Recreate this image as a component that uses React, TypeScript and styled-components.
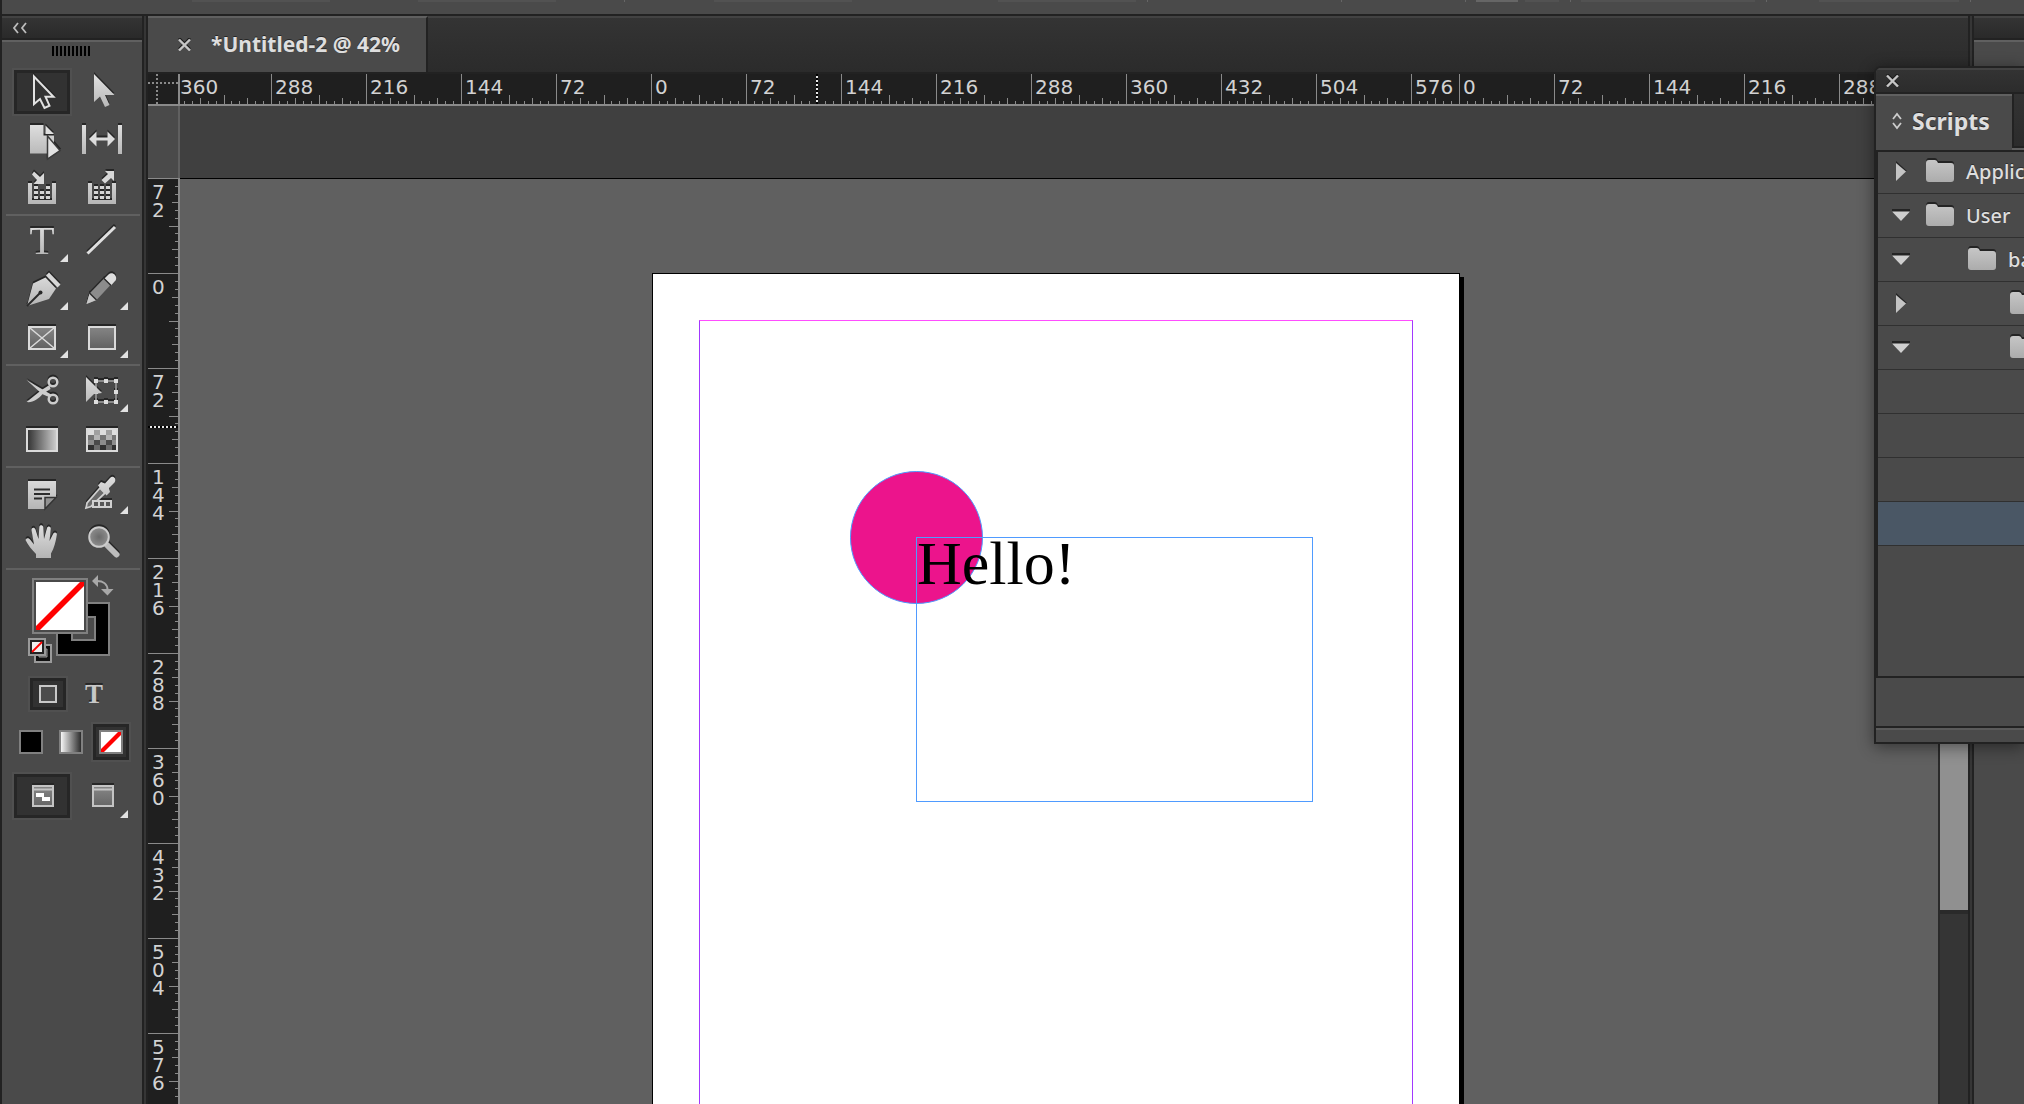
import React from "react";
import styled, { createGlobalStyle, css } from "styled-components";

const c = {
  edge: "#222222",
  panel: "#4a4a4a",
  highlight: "#606060",
  ruler: "#1f1f1f",
  tick: "#8a8a8a",
  board: "#606060",
  text: "#dedede",
  frame: "#4f9bff",
};

const STEP = 95;

const GlobalStyle = createGlobalStyle`
  *, *::before, *::after { box-sizing: border-box; }
  html, body { margin: 0; height: 100%; overflow: hidden; background: ${c.panel}; }
  body { font-family: "Noto Sans", "Open Sans", sans-serif; color: ${c.text}; }
  button { font: inherit; color: inherit; background: none; border: 0; padding: 0; margin: 0; cursor: pointer; }
  ul { list-style: none; margin: 0; padding: 0; }
  svg { display: block; }
`;

const Shell = styled.div`
  position: relative;
  height: 100vh;
  display: grid;
  grid-template-columns: minmax(0, 1fr);
  grid-template-rows: 16px minmax(0, 1fr);
  border-left: 2px solid ${c.edge};
  overflow: hidden;
`;

const ControlStrip = styled.header`
  display: flex;
  align-items: flex-start;
  padding-left: 190px;
  background: ${c.panel};
  border-bottom: 2px solid ${c.edge};
  overflow: hidden;
`;

const StripMark = styled.span<{ $gap: number; $width: number; $bright?: boolean }>`
  flex: none;
  height: 2px;
  margin-left: ${(p) => p.$gap}px;
  width: ${(p) => p.$width}px;
  background: ${(p) => (p.$bright ? "#666666" : "#525252")};
`;

const Workspace = styled.div`
  display: flex;
  min-height: 0;
`;

const Gutter = styled.div`
  flex: none;
  width: 6px;
  background: #363636;
  border: solid ${c.edge};
  border-width: 0 2px;
`;

const DockHeader = styled.div`
  display: flex;
  align-items: center;
  height: 24px;
  padding-left: 10px;
  background: linear-gradient(#343434, #2a2a2a);
  border-top: 2px solid #424242;
  border-bottom: 2px solid ${c.edge};
`;

const DockBody = styled.div`
  flex: 1;
  background: ${c.panel};
  border-top: 2px solid ${c.highlight};
`;

const RightDock = styled.aside`
  flex: none;
  width: 50px;
  display: flex;
  flex-direction: column;
`;

/* ---------- tool panel ---------- */

const Toolbox = styled.nav`
  flex: none;
  width: 140px;
  display: flex;
  flex-direction: column;
`;

const Grip = styled.div`
  width: 38px;
  height: 10px;
  margin: 4px 0 12px 50px;
  background: repeating-linear-gradient(90deg, #000000 0 2px, transparent 2px 4px);
`;

const ToolGroup = styled.div<{ $tail: number }>`
  display: grid;
  grid-template-columns: 56px 56px;
  gap: 4px;
  margin: 0 2px 0 4px;
  padding: 2px 8px ${(p) => p.$tail}px 8px;
  border-bottom: 2px solid ${c.highlight};
`;

const pressed = css`
  background: #323232;
  box-shadow: inset 0 0 0 3px #262626;
  outline: 2px solid #505050;
`;

const ToolButton = styled.button<{ $active?: boolean; $more?: boolean }>`
  position: relative;
  display: grid;
  place-items: center;
  width: 56px;
  height: 44px;
  ${(p) => p.$active && pressed}
  ${(p) =>
    p.$more &&
    css`
      &::after {
        content: "";
        position: absolute;
        right: 2px;
        bottom: 0;
        width: 8px;
        height: 8px;
        background: #e2e2e2;
        clip-path: polygon(100% 0, 100% 100%, 0 100%);
      }
    `}
`;

const ToolSvg = styled.svg`
  flex: none;
  width: 56px;
  height: 44px;
  overflow: visible;
  filter: drop-shadow(0 -2px 0 #262626);
`;

const ColorSection = styled.div`
  display: flex;
  flex-direction: column;
  gap: 14px;
  padding-top: 8px;
`;

const SwatchStack = styled.div`
  position: relative;
  height: 86px;
  margin-left: 26px;
`;

const StackedSwatch = styled.button<{ $left: number; $top: number }>`
  position: absolute;
  left: ${(p) => p.$left}px;
  top: ${(p) => p.$top}px;
`;

const ControlRow = styled.div<{ $inset: number; $gap: number }>`
  display: flex;
  gap: ${(p) => p.$gap}px;
  padding-left: ${(p) => p.$inset}px;
`;

const SmallButton = styled.button<{ $height: number; $active?: boolean }>`
  display: grid;
  place-items: center;
  width: 36px;
  height: ${(p) => p.$height}px;
  ${(p) => p.$active && pressed}
`;

const TypeButton = styled(SmallButton)`
  font: 700 27px/32px "Liberation Serif", serif;
  color: #c8c8c8;
  text-shadow: 0 -2px 0 #262626;
`;

/* ---------- document window ---------- */

const DocumentWindow = styled.main`
  flex: 1;
  min-width: 0;
  display: flex;
  flex-direction: column;
`;

const TabBar = styled.div`
  display: flex;
  height: 58px;
  background: linear-gradient(#343434, #2b2b2b);
  border-bottom: 2px solid ${c.edge};
  box-shadow: inset 0 2px 0 #424242;
`;

const DocTab = styled.div`
  display: flex;
  align-items: center;
  gap: 20px;
  padding: 0 26px 2px 30px;
  background: ${c.panel};
  border-top: 2px solid ${c.highlight};
  border-right: 2px solid ${c.edge};
  font-size: 21px;
  line-height: 28px;
  font-weight: 700;
  white-space: nowrap;
  text-shadow: 0 -1px 0 #262626;
`;

const RulerRow = styled.div`
  display: flex;
  height: 32px;
  background: ${c.ruler};
  border-bottom: 2px solid ${c.tick};
`;

const RulerOrigin = styled.div`
  flex: none;
  position: relative;
  width: 32px;
  border-right: 2px solid ${c.tick};
  &::before,
  &::after {
    content: "";
    position: absolute;
  }
  &::before {
    left: 8px;
    top: 0;
    width: 2px;
    height: 30px;
    background: repeating-linear-gradient(#8a8a8a 0 2px, transparent 2px 4px);
  }
  &::after {
    left: 0;
    top: 8px;
    width: 30px;
    height: 2px;
    background: repeating-linear-gradient(90deg, #8a8a8a 0 2px, transparent 2px 4px);
  }
`;

const HorizontalScale = styled.div`
  position: relative;
  flex: 1;
  min-width: 0;
  display: flex;
  overflow: hidden;
`;

const ScaleRun = styled.div`
  display: flex;
  flex: none;
  &:first-child {
    margin-left: -4px;
  }
`;

const HCell = styled.div<{ $width: number }>`
  flex: none;
  display: grid;
  width: ${(p) => p.$width}px;
  height: 30px;
  overflow: hidden;
  > * {
    grid-area: 1 / 1;
  }
`;

const HLabel = styled.span`
  padding: 1px 0 0 4px;
  font: 20px/24px "DejaVu Sans", sans-serif;
  color: #d2d2d2;
`;

const PointerMark = styled.i<{ $vertical?: boolean }>`
  position: absolute;
  ${(p) =>
    p.$vertical
      ? css`
          left: 0;
          top: 248px;
          width: 30px;
          height: 2px;
          background: repeating-linear-gradient(90deg, #000000 0 2px, #e8e8e8 2px 4px);
        `
      : css`
          left: 636px;
          top: 0;
          width: 2px;
          height: 30px;
          background: repeating-linear-gradient(#000000 0 2px, #e8e8e8 2px 4px);
        `}
`;

const Stage = styled.div`
  flex: 1;
  min-height: 0;
  display: flex;
`;

const SideRuler = styled.div`
  flex: none;
  width: 32px;
  display: flex;
  flex-direction: column;
`;

const SideGap = styled.div`
  height: 72px;
  flex: none;
  background: ${c.panel};
  border-right: 2px solid ${c.highlight};
`;

const VerticalScale = styled.div`
  position: relative;
  flex: 1;
  min-height: 0;
  overflow: hidden;
  background: ${c.ruler};
  border-right: 2px solid ${c.tick};
`;

const VCell = styled.div`
  display: grid;
  height: ${STEP}px;
  > * {
    grid-area: 1 / 1;
  }
`;

const VLabel = styled.span`
  display: flex;
  flex-direction: column;
  padding: 5px 0 0 4px;
  font: 20px/18px "DejaVu Sans", sans-serif;
  color: #d2d2d2;
`;

const Board = styled.div`
  flex: 1;
  min-width: 0;
  display: flex;
  flex-direction: column;
`;

const UpperBand = styled.div`
  flex: none;
  height: 73px;
  background: #404040;
  border-bottom: 1px solid #000000;
`;

const Pasteboard = styled.div`
  position: relative;
  flex: 1;
  min-height: 0;
  overflow: hidden;
  background: ${c.board};
`;

const Page = styled.section`
  position: absolute;
  left: 472px;
  top: 94px;
  width: 808px;
  height: 1046px;
  background: #ffffff;
  border: 1px solid #000000;
  box-shadow: 4px 4px 0 #000000;
`;

const Margins = styled.div`
  position: absolute;
  inset: 46px;
  border: 1px solid #a238ff;
  border-top-color: #ff4dff;
`;

const Circle = styled.div`
  position: absolute;
  left: 197px;
  top: 197px;
  width: 133px;
  height: 133px;
  border-radius: 50%;
  background: #ec148c;
  border: 1px solid ${c.frame};
`;

const TextFrame = styled.div`
  position: absolute;
  left: 263px;
  top: 263px;
  width: 397px;
  height: 265px;
  border: 1px solid ${c.frame};
`;

const Hello = styled.p`
  margin: 0;
  font: 62px/50px "Liberation Serif", serif;
  color: #000000;
`;

const ScrollTrack = styled.div`
  flex: none;
  width: 30px;
  background: #353535;
  border-left: 2px solid #2a2a2a;
`;

const ScrollThumb = styled.div`
  height: 804px;
  background: #909090;
  box-shadow: 0 4px 0 #2a2a2a;
`;

/* ---------- scripts panel ---------- */

const ScriptsPanel = styled.aside`
  position: absolute;
  top: 66px;
  right: 0;
  width: 150px;
  background: ${c.panel};
  border: 2px solid ${c.edge};
  border-right: 0;
  border-radius: 7px 0 0 0;
  box-shadow: 0 3px 16px rgba(0, 0, 0, 0.45);
  overflow: hidden;
`;

const PanelTitle = styled.div`
  display: flex;
  align-items: center;
  height: 26px;
  padding: 0 0 2px 10px;
  background: linear-gradient(#333333, #2c2c2c);
  border-top: 2px solid #424242;
  border-bottom: 2px solid ${c.edge};
`;

const PanelTabs = styled.div`
  display: flex;
  height: 56px;
`;

const PanelTab = styled.button`
  flex: none;
  display: flex;
  align-items: center;
  gap: 10px;
  width: 136px;
  padding: 0 0 4px 16px;
  border-top: 2px solid ${c.highlight};
  font-size: 23px;
  line-height: 30px;
  font-weight: 700;
  text-shadow: 0 -1px 0 #262626;
`;

const TabRest = styled.div`
  flex: 1;
  height: 54px;
  background: linear-gradient(#333333, #2c2c2c);
  border-left: 2px solid ${c.edge};
  border-bottom: 2px solid ${c.edge};
  box-shadow: 0 2px 0 ${c.highlight};
`;

const ScriptList = styled.ul`
  height: 528px;
  border: solid ${c.edge};
  border-width: 2px 0 2px 2px;
`;

const ScriptRow = styled.li<{ $selected?: boolean }>`
  display: flex;
  align-items: center;
  height: 44px;
  padding-left: 13px;
  background: ${(p) => (p.$selected ? "#4a5765" : "transparent")};
  border-bottom: 1px solid #303030;
  overflow: hidden;
  &:first-child {
    height: 42px;
    padding-bottom: 2px;
  }
`;

const Twirl = styled.button`
  flex: none;
  width: 20px;
  height: 24px;
  margin-bottom: 2px;
  display: grid;
  place-items: center;
`;

const RowContent = styled.span<{ $depth: number }>`
  display: flex;
  align-items: center;
  gap: 12px;
  padding-left: ${(p) => 15 + p.$depth * 42}px;
  font-size: 20px;
  line-height: 28px;
  font-weight: 500;
  white-space: nowrap;
  text-shadow: 0 -1px 0 #303030;
  svg {
    flex: none;
    margin-bottom: 4px;
  }
`;

const PanelFooter = styled.div`
  height: 50px;
  border-bottom: 2px solid ${c.edge};
`;

const PanelGrip = styled.div`
  height: 14px;
  border-top: 2px solid #5a5a5a;
`;

/* ---------- drawings ---------- */

const G = "url(#metal)";
const D = "url(#dim)";

const SharedGradients = () => (
  <svg width="0" height="0" style={{ position: "absolute" }} aria-hidden="true">
    <defs>
      <linearGradient id="metal" gradientUnits="userSpaceOnUse" x1="0" y1="4" x2="0" y2="40">
        <stop offset="0" stopColor="#e2e2e2" />
        <stop offset="1" stopColor="#b4b4b4" />
      </linearGradient>
      <linearGradient id="dim" gradientUnits="userSpaceOnUse" x1="0" y1="10" x2="0" y2="38">
        <stop offset="0" stopColor="#8a8a8a" />
        <stop offset="1" stopColor="#5c5c5c" />
      </linearGradient>
      <linearGradient id="folder" x1="0" y1="0" x2="0" y2="1">
        <stop offset="0" stopColor="#c6c6c6" />
        <stop offset="1" stopColor="#acacac" />
      </linearGradient>
      <linearGradient id="ramp">
        <stop offset="0" stopColor="#303030" />
        <stop offset="1" stopColor="#d0d0d0" />
      </linearGradient>
      <linearGradient id="rampBack">
        <stop offset="0" stopColor="#ffffff" />
        <stop offset="1" stopColor="#222222" />
      </linearGradient>
      <radialGradient id="lens">
        <stop offset="0" stopColor="#6a6a6a" />
        <stop offset="1" stopColor="#8e8e8e" />
      </radialGradient>
    </defs>
  </svg>
);

const Close = () => (
  <svg width="13" height="13" viewBox="0 0 13 13" fill="none" strokeWidth="2.4">
    <path d="M1 0L12 11M12 0L1 11" stroke="#1c1c1c" />
    <path d="M1 1.5L12 12.5M12 1.5L1 12.5" stroke="#c6c6c6" />
  </svg>
);

const cells = (cols: number[], rows: number[]) =>
  cols.flatMap((x) => rows.map((y) => [x, y] as const));

const Basket = ({ skip }: { skip?: boolean }) => (
  <>
    <path d="M14 17h4v17h20V17h4v21H14z" fill={G} />
    {cells([20, 26, 32], [20, 25, 30])
      .filter(([x, y]) => !(skip && x === 26 && y < 25))
      .map(([x, y]) => (
        <rect key={`${x}-${y}`} x={x} y={y} width="4" height="3" fill="#d4d4d4" />
      ))}
  </>
);

/* Feather checker: each row runs from a light to a dark pair of tones. */
const featherTones = [
  ["#dedede", "#a0a0a0"],
  ["#b4b4b4", "#757575"],
  ["#8c8c8c", "#4a4a4a"],
  ["#6c6c6c", "#303030"],
];

const art: Record<string, React.ReactNode> = {
  selection: (
    <path d="M20 6.500V34l6-5 4.500 9 5-2.300-4-9h8z" fill="#333333" stroke="#e2e2e2" strokeWidth="2" />
  ),
  direct: <path d="M20 4v28l6-5.500 5 10.500 4.500-2-4.500-10h9.500z" fill={G} />,
  page: (
    <>
      <path d="M16 7h13.500v10.500H40v18H16z" fill={G} />
      <path d="M31.500 7.500l8.500 8.500h-8.500z" fill="#dedede" />
      <path d="M33.500 18v23l12.500-8.500z" fill="#e2e2e2" stroke="#3a3a3a" strokeWidth="1.500" />
    </>
  ),
  gap: (
    <>
      <path d="M8 7h4v29H8zM44 7h4v29h-4z" fill={G} />
      <path d="M15 21l7.500-7.500V19.500h11V13.500L41 21l-7.500 7.500V22.500h-11v6z" fill="#dcdcdc" />
    </>
  ),
  collector: (
    <>
      <path d="M20 5.500l6 5.500 4-4v11H19.500l3.500-4-5-5.500z" fill="#d8d8d8" />
      <Basket skip />
    </>
  ),
  placer: (
    <>
      <path d="M31 5h9v10l-3-3-6 5.500-3.500-3.500 6.500-6z" fill="#d8d8d8" />
      <Basket />
    </>
  ),
  type: (
    <text x="28" y="36" textAnchor="middle" fontFamily="Liberation Serif" fontSize="41" fill={G}>
      T
    </text>
  ),
  line: <path d="M13.500 35.500L41 9" stroke="#e0e0e0" strokeWidth="3" />,
  pen: (
    <>
      <path d="M13 40l6-22.500 12.500-6L42 22.500 35 33z" fill={G} />
      <path d="M32 9.500l3-3L46.500 18.500l-3 3z" fill="#d8d8d8" />
      <path d="M13 40l13-13" stroke="#2a2a2a" strokeWidth="2" />
      <circle cx="26.500" cy="26.500" r="2" fill="#2a2a2a" />
    </>
  ),
  pencil: (
    <>
      <path d="M12.500 38l3-10.500L30 12.500l6.500 6.500L22.500 34z" fill="#8c8c8c" />
      <path d="M12.500 38l3-10.500 7 6.500z" fill="#c8c8c8" />
      <path d="M30.500 12.500l4-4c4-3.500 9.500 1.500 7 6L37 19.500z" fill="#dedede" />
      <path d="M30 12.500l7 7M15.500 27l7 7" stroke="#303030" strokeWidth="1.500" />
    </>
  ),
  frame: (
    <>
      <rect x="15" y="13" width="26" height="22" fill={D} stroke="#dadada" strokeWidth="2" />
      <path d="M16 14l24 20M40 14L16 34" stroke="#dadada" strokeWidth="1.500" />
    </>
  ),
  rect: <rect x="15" y="13" width="26" height="22" fill={D} stroke="#dadada" strokeWidth="2" />,
  scissors: (
    <g fill="none" stroke="#cccccc">
      <path d="M12.500 12L38 27l-2 2.500-8-3.500z" fill="#cccccc" stroke="none" />
      <path d="M12.500 34c6 1 12-3 16-8l8-5-1-4-8 5z" fill="#cccccc" stroke="none" />
      <circle cx="39" cy="14" r="4.300" strokeWidth="2.500" />
      <circle cx="39" cy="31" r="4.300" strokeWidth="2.500" />
    </g>
  ),
  transform: (
    <>
      <rect x="22" y="13" width="20" height="21" fill="none" stroke="#8a8a8a" strokeWidth="2" />
      {cells([20, 30, 40], [11, 22, 32])
        .filter(([x, y]) => !(x === 30 && y === 22))
        .map(([x, y]) => (
          <rect key={`${x}-${y}`} x={x} y={y} width="4" height="4" fill="#dedede" />
        ))}
      <path d="M12 9l16 16-8 1-8 8z" fill={G} />
    </>
  ),
  gradient: <rect x="13" y="13" width="30" height="22" fill="url(#ramp)" stroke="#dadada" strokeWidth="2" />,
  feather: (
    <>
      <rect x="13" y="13" width="30" height="22" fill="#777777" stroke="#dadada" strokeWidth="2" />
      {cells([14, 20, 26, 32, 38], [14, 19, 24, 29]).map(([x, y]) => {
        const row = (y - 14) / 5;
        const odd = ((x - 14) / 6 + row) % 2;
        return (
          <rect key={`${x}-${y}`} x={x} y={y} width={x === 38 ? 4 : 6} height="5" fill={featherTones[row][odd]} />
        );
      })}
    </>
  ),
  note: (
    <>
      <path d="M14 11h28v16L31 39H14z" fill={G} />
      <path d="M31 39V27.500h11z" fill="#929292" stroke="#333333" strokeWidth="1.500" />
      <path d="M20 19.500h16M20 24h16M20 28.500h8" stroke="#2c2c2c" strokeWidth="2" />
    </>
  ),
  eyedropper: (
    <>
      <path d="M26 18l5 5-14 13.500-5 1.500 1-5z" fill="#6a6a6a" stroke="#cfcfcf" strokeWidth="1.800" />
      <path d="M24 15.500l3-3.500 4 1.500 5-5.500c3-3 7 .500 4.500 4.500L35 18l1 4-3.500 3.500z" fill={G} />
      <path d="M18 30h20v8H18z" fill="#cfcfcf" />
      <path d="M20 32h4v4h-4zM26 32h4v4h-4zM32 32h4v4h-4z" fill="#555555" />
    </>
  ),
  hand: (
    <path
      d="M22 40v-4c-4-4-8-9-10.500-14 1-2.500 3.500-2 5 0l3.500 4.500L17.500 12c0-2.500 3-3 4-.500L24.500 21l.800-12c.200-2.500 3.500-2.500 4 0L30 21l3-11c.800-2.500 4-1.800 3.800.800L35.500 23l3.800-7.500c1.200-2 4.200-1 3.500 1.500-1 6-2.500 13-5.800 18.500v4.500z"
      fill={G}
    />
  ),
  zoom: (
    <>
      <path d="M33.500 27.500l9 9" stroke="#bdbdbd" strokeWidth="6" strokeLinecap="round" />
      <circle cx="25" cy="19" r="9.800" fill="url(#lens)" stroke="#cccccc" strokeWidth="2" />
    </>
  ),
  preview: (
    <>
      <rect x="19" y="12" width="20" height="20" fill={D} stroke="#c4c4c4" strokeWidth="2" />
      <path d="M18 15.500h22" stroke="#c4c4c4" strokeWidth="2" />
      <path d="M22 19h8v4h-8zM28 23h8v4h-8z" fill="#ffffff" />
    </>
  ),
  screen: (
    <>
      <rect x="19" y="12" width="20" height="20" fill={D} stroke="#c4c4c4" strokeWidth="2" />
      <path d="M18 15.500h22" stroke="#c4c4c4" strokeWidth="2" />
    </>
  ),
};

type ToolDef = { id: string; label: string; more?: boolean; active?: boolean };

const Tool = ({ id, label, more, active }: ToolDef) => (
  <ToolButton type="button" aria-label={label} aria-pressed={!!active} $active={active} $more={more}>
    <ToolSvg viewBox="0 0 56 44">{art[id]}</ToolSvg>
  </ToolButton>
);

const groups: ToolDef[][] = [
  [
    { id: "selection", label: "Selection", active: true },
    { id: "direct", label: "Direct selection" },
    { id: "page", label: "Page" },
    { id: "gap", label: "Gap" },
    { id: "collector", label: "Content collector" },
    { id: "placer", label: "Content placer" },
  ],
  [
    { id: "type", label: "Type", more: true },
    { id: "line", label: "Line" },
    { id: "pen", label: "Pen", more: true },
    { id: "pencil", label: "Pencil", more: true },
    { id: "frame", label: "Rectangle frame", more: true },
    { id: "rect", label: "Rectangle", more: true },
  ],
  [
    { id: "scissors", label: "Scissors" },
    { id: "transform", label: "Free transform", more: true },
    { id: "gradient", label: "Gradient swatch" },
    { id: "feather", label: "Gradient feather" },
  ],
  [
    { id: "note", label: "Note" },
    { id: "eyedropper", label: "Eyedropper", more: true },
    { id: "hand", label: "Hand" },
    { id: "zoom", label: "Zoom" },
  ],
];

const MiniSwatch = ({ kind }: { kind: "solid" | "ramp" | "none" }) => (
  <svg width="24" height="24" viewBox="0 0 24 24">
    <rect
      x="1"
      y="1"
      width="22"
      height="22"
      fill={kind === "solid" ? "#000000" : kind === "ramp" ? "url(#rampBack)" : "#ffffff"}
      stroke="#808080"
      strokeWidth="2"
    />
    {kind === "none" && <path d="M2 19v3h3L22 5V2h-3z" fill="#ff0000" />}
  </svg>
);

const ColorControls = () => (
  <ColorSection>
    <SwatchStack>
      <StackedSwatch type="button" aria-label="Stroke colour" $left={28} $top={24}>
        <svg width="54" height="54" viewBox="0 0 54 54">
          <path d="M1 1h52v52H1z" fill="#000000" stroke="#808080" strokeWidth="2" />
          <path d="M16 15h23v23H16z" fill="#4a4a4a" stroke="#808080" strokeWidth="2" />
        </svg>
      </StackedSwatch>
      <StackedSwatch type="button" aria-label="Fill colour" $left={4} $top={0}>
        <svg width="56" height="56" viewBox="0 0 56 56">
          <path d="M0 0h56v56H0z" fill="#808080" />
          <path d="M2 2h52v52H2z" fill="#4a4a4a" />
          <path d="M4 4h48v48H4z" fill="#ffffff" />
          <path d="M4 48v4h4L52 8V4h-4z" fill="#ff0000" />
        </svg>
      </StackedSwatch>
      <StackedSwatch type="button" aria-label="Swap fill and stroke" $left={64} $top={-4}>
        <svg width="22" height="22" viewBox="0 0 22 22" fill="#a8a8a8">
          <path d="M0 7l6-6v12zM9 15h12.500L15.500 21.500z" />
          <path d="M5 7c6 0 10.500 3 10.500 9" fill="none" stroke="#a8a8a8" strokeWidth="2" />
        </svg>
      </StackedSwatch>
      <StackedSwatch type="button" aria-label="Default fill and stroke" $left={0} $top={60}>
        <svg width="24" height="25" viewBox="0 0 24 25">
          <path d="M7 7h16v17H7z" fill="#111111" stroke="#9a9a9a" strokeWidth="2" />
          <path d="M11 11h8v8h-8z" fill="#4a4a4a" stroke="#9a9a9a" />
          <path d="M1 1h16v16H1z" fill="#222222" stroke="#9a9a9a" strokeWidth="2" />
          <path d="M4 4h10v10H4z" fill="#eeeeee" />
          <path d="M4 14L14 4" stroke="#ff0000" strokeWidth="1.800" />
        </svg>
      </StackedSwatch>
    </SwatchStack>
    <ControlRow $inset={28} $gap={10}>
      <SmallButton type="button" aria-label="Formatting affects container" $height={32} $active>
        <svg width="18" height="18" viewBox="0 0 18 18">
          <path d="M1 1h16v16H1z" fill="#4c4c4c" stroke="#c8c8c8" strokeWidth="2" />
        </svg>
      </SmallButton>
      <TypeButton type="button" aria-label="Formatting affects text" $height={32}>
        T
      </TypeButton>
    </ControlRow>
    <ControlRow $inset={11} $gap={4}>
      <SmallButton type="button" aria-label="Apply colour" $height={36}>
        <MiniSwatch kind="solid" />
      </SmallButton>
      <SmallButton type="button" aria-label="Apply gradient" $height={36}>
        <MiniSwatch kind="ramp" />
      </SmallButton>
      <SmallButton type="button" aria-label="Apply none" $height={36} $active>
        <MiniSwatch kind="none" />
      </SmallButton>
    </ControlRow>
    <ControlRow $inset={12} $gap={4}>
      <Tool id="preview" label="View options" active />
      <Tool id="screen" label="Screen mode" more />
    </ControlRow>
  </ColorSection>
);

/* Twelve divisions per 72 points: quarter marks are longer, the half mark longest. */
const ticks = Array.from({ length: 12 }, (_, i) => ({
  at: Math.round((i * STEP) / 12),
  size: i === 0 ? 30 : i === 6 ? 9 : i % 3 === 0 ? 6 : 3,
}));

const HTicks = () => (
  <svg width={STEP} height="30" fill={c.tick}>
    {ticks.map((t) => (
      <rect key={t.at} x={t.at} y={30 - t.size} width="1" height={t.size} />
    ))}
  </svg>
);

const VTicks = () => (
  <svg width="30" height={STEP} fill={c.tick}>
    {ticks.map((t) => (
      <rect key={t.at} x={30 - t.size} y={t.at} width={t.size} height="1" />
    ))}
  </svg>
);

const horizontalRuns = [
  [360, 288, 216, 144, 72, 0, 72, 144, 216, 288, 360, 432, 504, 576],
  [0, 72, 144, 216, 288, 360],
];
const verticalMarks = ["72", "0", "72", "144", "216", "288", "360", "432", "504", "576"];

const Folder = () => (
  <svg width="28" height="26" viewBox="0 0 28 26">
    <path d="M0 5q0-4 3-4h6q2 0 3 3h13q3 0 3 3v4H0z" fill="#242424" />
    <path d="M0 6q0-3 3-3h6q2 0 3 3h13q3 0 3 3v13q0 3-3 3H3q-3 0-3-3z" fill="url(#folder)" />
  </svg>
);

const Arrow = ({ open }: { open?: boolean }) =>
  open ? (
    <svg width="18" height="12" viewBox="0 0 18 12">
      <path d="M0 0h18v3H0z" fill="#242424" />
      <path d="M0 2.500h18L9 12z" fill="#cfcfcf" />
    </svg>
  ) : (
    <svg width="12" height="20" viewBox="-1 0 12 20">
      <path d="M0 0l11 10H0z" fill="#242424" />
      <path d="M0 2l10 8.500L0 20z" fill="#c4c4c4" />
    </svg>
  );

type Row = { name?: string; depth: number; open?: boolean; folder?: boolean; selected?: boolean };

const scriptRows: Row[] = [
  { name: "Application", depth: 0, folder: true },
  { name: "User", depth: 0, folder: true, open: true },
  { name: "ba", depth: 1, folder: true, open: true },
  { depth: 2, folder: true },
  { depth: 2, folder: true, open: true },
  { depth: 3 },
  { depth: 3 },
  { depth: 3 },
  { depth: 3, selected: true },
];

const Scripts = () => (
  <ScriptsPanel>
    <PanelTitle>
      <button type="button" aria-label="Close panel">
        <Close />
      </button>
    </PanelTitle>
    <PanelTabs>
      <PanelTab type="button">
        <svg width="10" height="18" viewBox="0 0 10 18" fill="none" stroke="#cccccc" strokeWidth="1.800">
          <path d="M1 7l4-5 4 5M1 11l4 5 4-5" />
        </svg>
        Scripts
      </PanelTab>
      <TabRest />
    </PanelTabs>
    <ScriptList>
      {scriptRows.map((row, i) => (
        <ScriptRow key={i} $selected={row.selected}>
          {row.folder && (
            <>
              <Twirl type="button" aria-label={row.open ? "Collapse" : "Expand"}>
                <Arrow open={row.open} />
              </Twirl>
              <RowContent $depth={row.depth}>
                <Folder />
                {row.name}
              </RowContent>
            </>
          )}
        </ScriptRow>
      ))}
    </ScriptList>
    <PanelFooter />
    <PanelGrip />
  </ScriptsPanel>
);

const stripMarks: [number, number, boolean?][] = [
  [0, 138], [88, 138], [68, 1, true], [89, 138], [146, 138], [11, 1, true], [193, 1, true],
  [123, 1, true], [10, 42, true], [7, 34], [11, 1, true], [10, 174], [11, 1, true], [52, 140], [11, 1, true],
];

export default function App() {
  return (
    <>
      <GlobalStyle />
      <SharedGradients />
      <Shell>
        <ControlStrip>
          {stripMarks.map(([gap, width, bright], i) => (
            <StripMark key={i} $gap={gap} $width={width} $bright={bright} />
          ))}
        </ControlStrip>
        <Workspace>
          <Toolbox aria-label="Tools">
            <DockHeader>
              <button type="button" aria-label="Collapse tools">
                <svg width="15" height="12" viewBox="0 0 15 12" fill="none" stroke="#bcbcbc" strokeWidth="1.800">
                  <path d="M6 1L2 6l4 5M14 1l-4 5 4 5" />
                </svg>
              </button>
            </DockHeader>
            <DockBody>
              <Grip />
              {groups.map((tools, i) => (
                <ToolGroup key={i} $tail={i === 0 ? 4 : 6}>
                  {tools.map((t) => (
                    <Tool key={t.id} {...t} />
                  ))}
                </ToolGroup>
              ))}
              <ColorControls />
            </DockBody>
          </Toolbox>
          <Gutter />
          <DocumentWindow>
            <TabBar>
              <DocTab>
                <button type="button" aria-label="Close document">
                  <Close />
                </button>
                *Untitled-2 @ 42%
              </DocTab>
            </TabBar>
            <RulerRow>
              <RulerOrigin />
              <HorizontalScale>
                {horizontalRuns.map((run, r) => (
                  <ScaleRun key={r}>
                    {run.map((mark, i) => (
                      <HCell key={i} $width={r === 0 && i === run.length - 1 ? 48 : STEP}>
                        <HTicks />
                        <HLabel>{mark}</HLabel>
                      </HCell>
                    ))}
                  </ScaleRun>
                ))}
                <PointerMark />
              </HorizontalScale>
            </RulerRow>
            <Stage>
              <SideRuler>
                <SideGap />
                <VerticalScale>
                  {verticalMarks.map((mark, i) => (
                    <VCell key={i}>
                      <VTicks />
                      <VLabel>
                        {mark.split("").map((d, k) => (
                          <span key={k}>{d}</span>
                        ))}
                      </VLabel>
                    </VCell>
                  ))}
                  <PointerMark $vertical />
                </VerticalScale>
              </SideRuler>
              <Board>
                <UpperBand />
                <Pasteboard>
                  <Page>
                    <Margins />
                    <Circle />
                    <TextFrame>
                      <Hello>Hello!</Hello>
                    </TextFrame>
                  </Page>
                </Pasteboard>
              </Board>
              <ScrollTrack>
                <ScrollThumb />
              </ScrollTrack>
            </Stage>
          </DocumentWindow>
          <Gutter />
          <RightDock>
            <DockHeader />
            <DockBody />
          </RightDock>
        </Workspace>
        <Scripts />
      </Shell>
    </>
  );
}
